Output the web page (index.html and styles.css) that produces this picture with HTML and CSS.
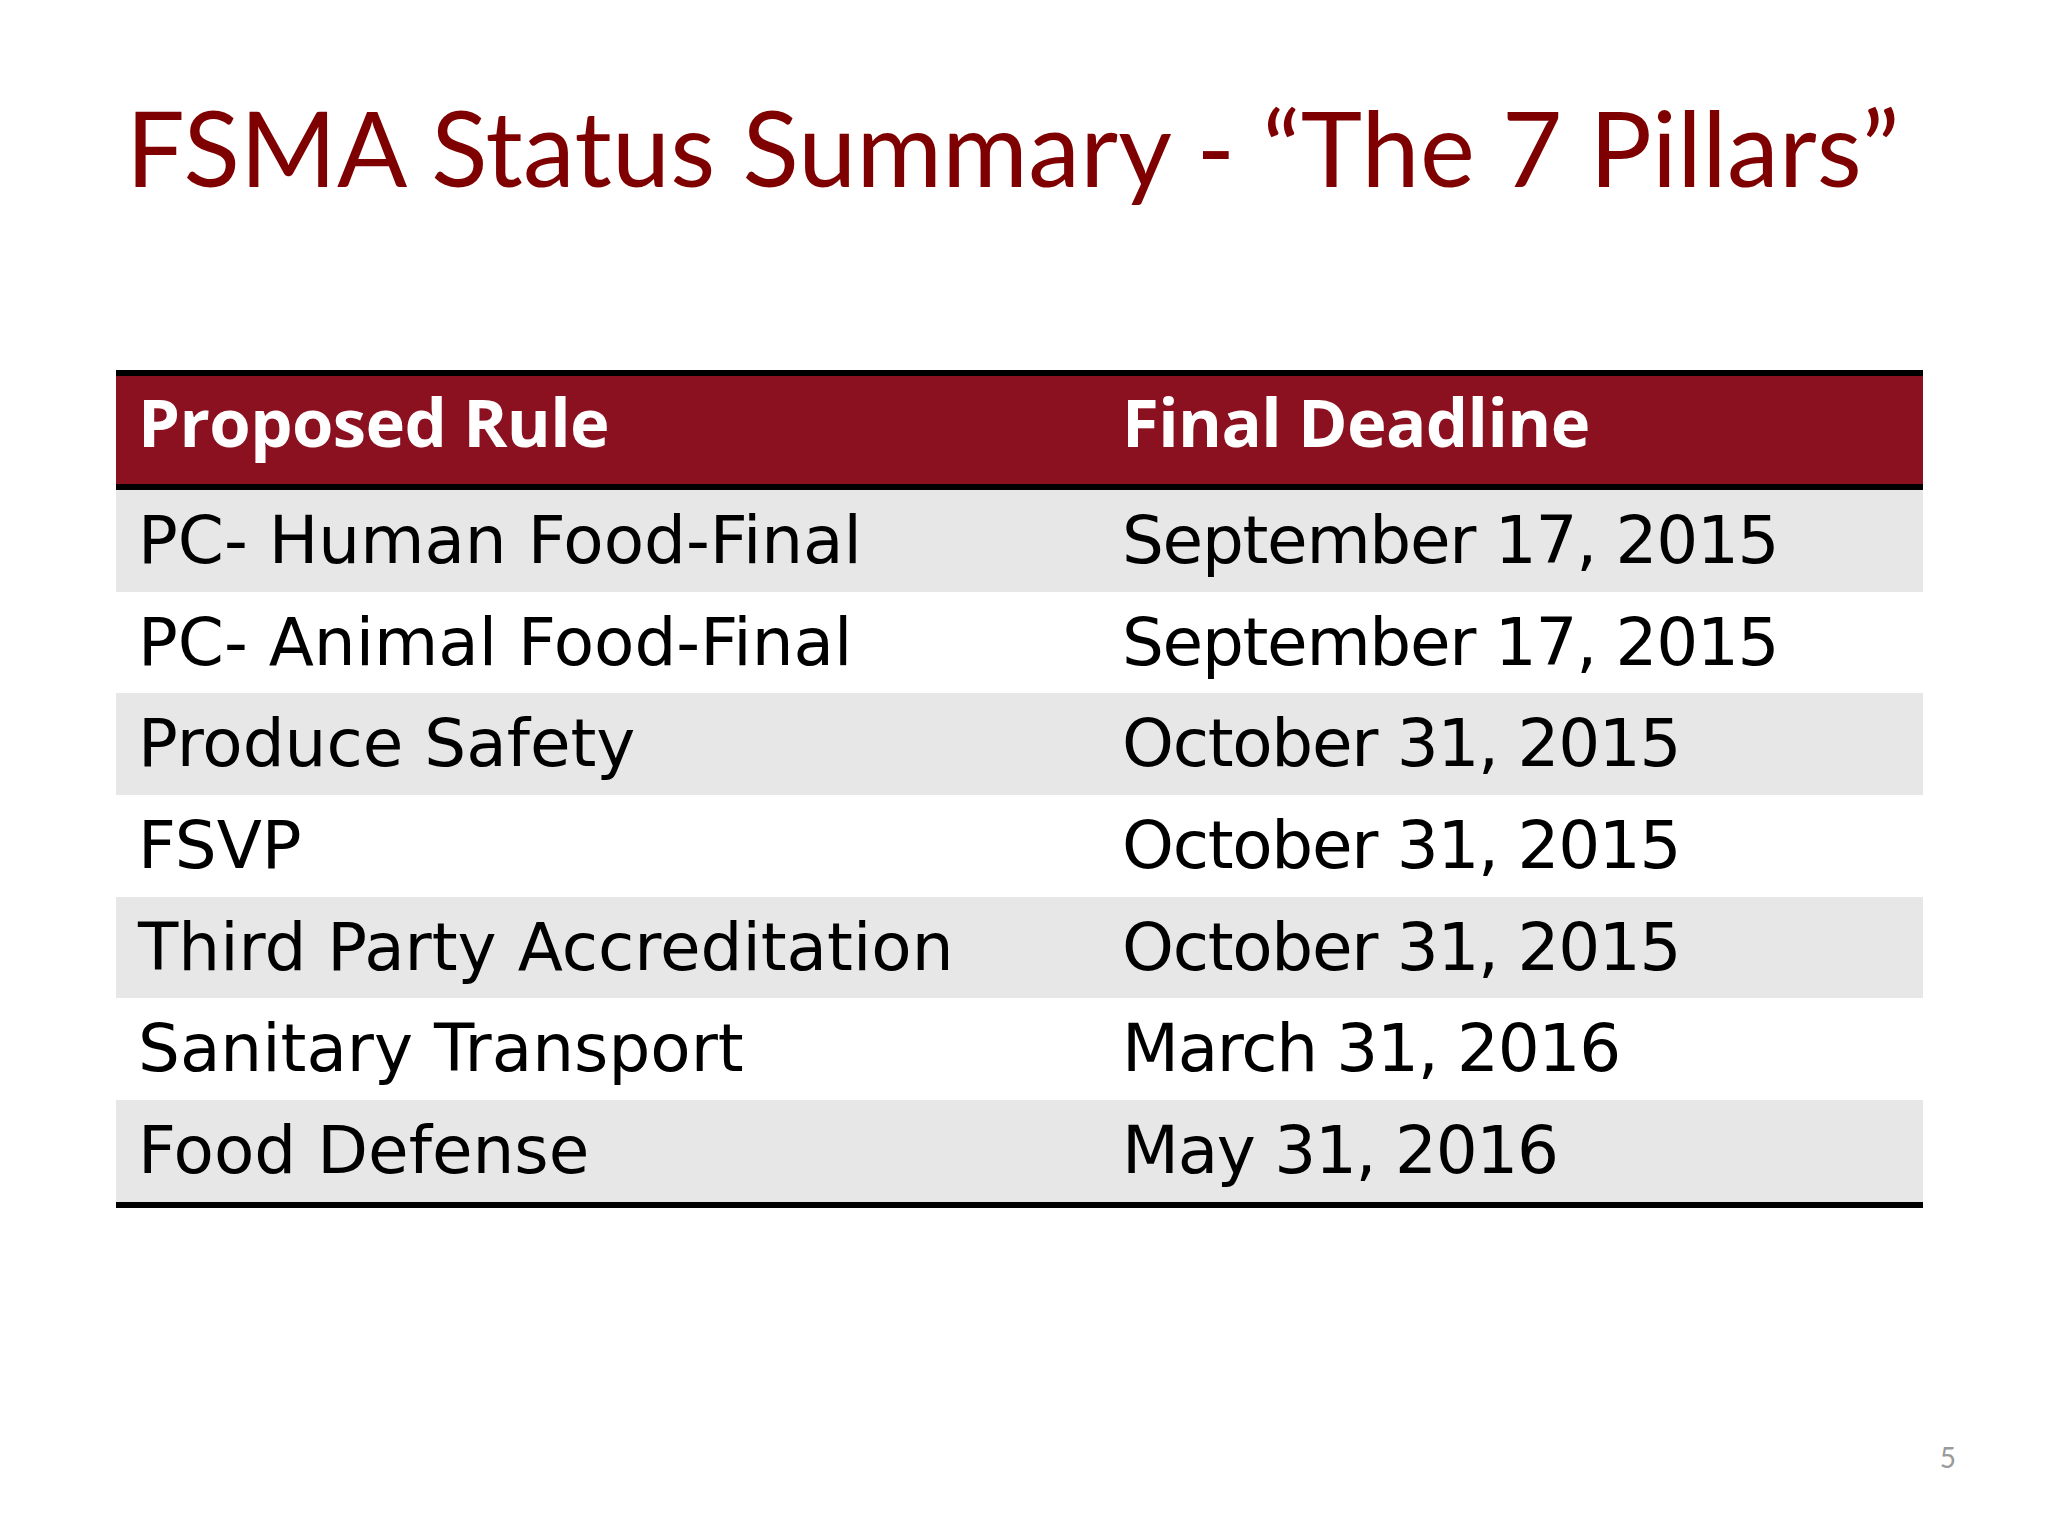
FILE: index.html
```html
<!DOCTYPE html>
<html lang="en">
<head>
<meta charset="utf-8">
<title>FSMA Status Summary</title>
<link rel="stylesheet" href="styles.css">
</head>
<body>
<div class="slide">
  <h1 class="title">FSMA Status Summary - “The 7 Pillars”</h1>
  <table class="rules">
    <thead>
      <tr><th class="col-rule">Proposed Rule</th><th class="col-date">Final Deadline</th></tr>
    </thead>
    <tbody>
      <tr class="odd"><td>PC- Human Food-Final</td><td class="date">September 17, 2015</td></tr>
      <tr><td>PC- Animal Food-Final</td><td class="date">September 17, 2015</td></tr>
      <tr class="odd"><td>Produce Safety</td><td class="date">October 31, 2015</td></tr>
      <tr><td>FSVP</td><td class="date">October 31, 2015</td></tr>
      <tr class="odd"><td>Third Party Accreditation</td><td class="date">October 31, 2015</td></tr>
      <tr><td>Sanitary Transport</td><td class="date">March 31, 2016</td></tr>
      <tr class="odd"><td>Food Defense</td><td class="date">May 31, 2016</td></tr>
    </tbody>
  </table>
  <div class="footer"><span class="page-num">5</span></div>
</div>
</body>
</html>
```
FILE: styles.css
```css
html, body {
  margin: 0;
  padding: 0;
  background: #ffffff;
}

.slide {
  width: 2048px;
  height: 1536px;
  display: flex;
  flex-direction: column;
  box-sizing: border-box;
}

.title {
  margin: 0;
  padding: 95px 0 0 126px;
  font-family: Lato, "Open Sans", sans-serif;
  font-weight: 400;
  font-size: 104px;
  line-height: 104px;
  letter-spacing: 0.3px;
  color: #7f0000;
  white-space: nowrap;
}

.rules {
  margin: 171px 0 0 116px;
  width: 1807px;
  border-collapse: separate;
  border-spacing: 0;
  table-layout: fixed;
  border-top: 6px solid #000;
  border-bottom: 6px solid #000;
}

.col-rule {
  width: 984px;
}

.rules th {
  background: #8c1120;
  color: #ffffff;
  font-family: "Open Sans", Lato, sans-serif;
  font-weight: 700;
  font-size: 67px;
  letter-spacing: -0.6px;
  text-align: left;
  height: 114px;
  padding: 0 0 18px 22px;
  box-sizing: border-box;
  border-bottom: 6px solid #000;
  vertical-align: middle;
  line-height: 1;
  white-space: nowrap;
}

.rules td {
  font-family: "DejaVu Sans", sans-serif;
  font-weight: 400;
  font-size: 66px;
  color: #000;
  height: 101.7px;
  padding: 0 0 0 22px;
  box-sizing: border-box;
  vertical-align: middle;
  line-height: 1;
  white-space: nowrap;
}

.rules td.date {
  letter-spacing: -1.3px;
}

.rules tr.odd td {
  background: #e7e7e7;
}

.footer {
  margin-top: auto;
  padding: 0 92px 62px 0;
  text-align: right;
}

.page-num {
  font-family: Lato, "Open Sans", sans-serif;
  font-size: 28px;
  color: #9a9a9a;
}
```
